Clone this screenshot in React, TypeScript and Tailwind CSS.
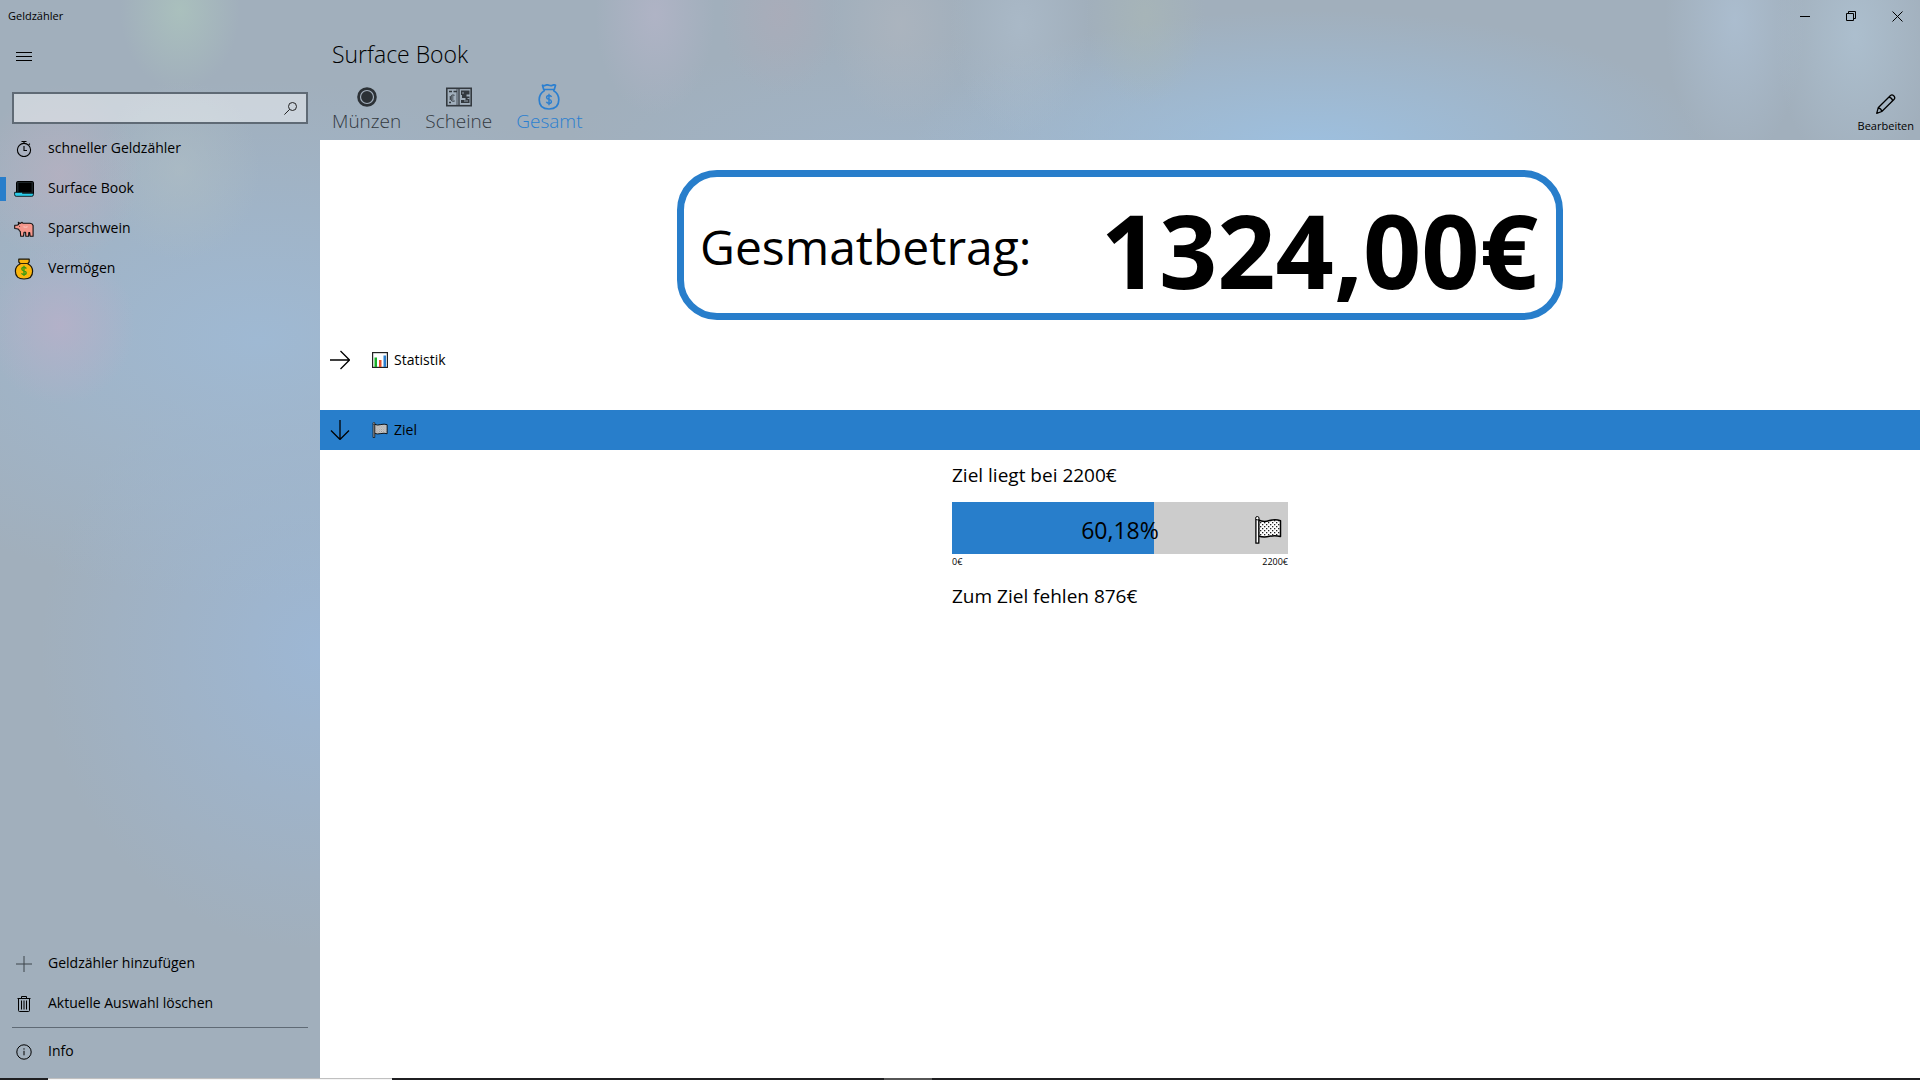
import type { ReactNode } from "react";

type IconProps = { className?: string };

function MenuIcon() {
  return (
    <svg className="size-4" viewBox="0 0 16 16" stroke="#000" shapeRendering="crispEdges" aria-hidden="true">
      <path d="M0 4.500h16M0 8.500h16M0 12.500h16" />
    </svg>
  );
}

function SearchIcon() {
  return (
    <svg className="size-[13px]" viewBox="0 0 13 13" fill="none" stroke="#222" strokeWidth="1" aria-hidden="true">
      <circle cx="8.500" cy="4.500" r="4" />
      <path d="M5.600 7.400L.4 12.600" />
    </svg>
  );
}

function StopwatchIcon() {
  return (
    <svg className="size-4" viewBox="0 0 16 16" fill="none" stroke="#000" strokeWidth="1.100" aria-hidden="true">
      <circle cx="8" cy="9" r="6.600" />
      <path d="M5.500.5h5M8 .5v2M8 5v4.500h3M12.700 3.800l1.200-1.200" />
    </svg>
  );
}

function LaptopIcon() {
  return (
    <svg className="h-4 w-5" viewBox="0 0 20 16" aria-hidden="true">
      <rect x="2.500" y=".5" width="17" height="13" rx="1.200" fill="#1c2326" stroke="#000" />
      <rect x="4.500" y="2" width="13" height="9" fill="#000" />
      <path d="M.6 11.300h7l.9.9h10.900v1.500q0 1.600-1.600 1.600H2.200Q.6 15.300.6 13.700z" fill="#2ccbe8" stroke="#000" strokeWidth=".8" />
    </svg>
  );
}

function PigIcon() {
  return (
    <svg className="h-4 w-5" viewBox="0 0 20 16" stroke="#111" strokeWidth="1.100" strokeLinejoin="round" aria-hidden="true">
      <path
        d="M4.300 1.200l1.800 1.300 2-1.200 1 1h7q2.400.2 3 2.200v10.700h-3l-.4-3.600-.9 0-.2 3.600h-2.800l-.2-4-1.600 0-.5 4H6.700l-.4-4.700Q5.200 9.800 4.700 8.300L2.800 7.800.7 7.500V4.300l2.300 0 1.700-.7z"
        fill="#f5978c"
      />
      <path d="M9.500 5.500q2 1.600 4 0" stroke="#fbc0b8" fill="none" />
      <circle cx="5.600" cy="5.200" r=".5" fill="#111" stroke="none" />
    </svg>
  );
}

function GoldBagIcon() {
  return (
    <svg className="h-[22px] w-5" viewBox="0 0 20 22" strokeLinejoin="round" aria-hidden="true">
      <path
        d="M4.800 1.200h10.400v2.800l-1.500 1.700Q18.600 8 18.600 13.200q0 7.800-8.600 7.800t-8.600-7.800Q1.400 8 6.300 5.700L4.800 4z"
        fill="#fbb50c"
        stroke="#1b1608"
        strokeWidth="1.200"
      />
      <path d="M6.500 5.500h7" stroke="#1b1608" strokeWidth=".9" />
      <path
        d="M12.300 10.600q-.6-1.400-2.300-1.400-2.200 0-2.200 1.800 0 1.400 2.200 1.900t2.200 1.900q0 1.800-2.200 1.800-1.900 0-2.400-1.500M10 7.800v10.300"
        fill="none"
        stroke="#3f9a12"
        strokeWidth="1.400"
      />
    </svg>
  );
}

function PlusIcon() {
  return (
    <svg className="size-4" viewBox="0 0 16 16" stroke="#3d444b" aria-hidden="true">
      <path d="M0 8h16M8 0v16" />
    </svg>
  );
}

function TrashIcon() {
  return (
    <svg className="size-4" viewBox="0 0 16 16" fill="none" stroke="#000" strokeWidth="1" aria-hidden="true">
      <path d="M1.500 2.500h13M5.500 2.500v-2h5v2M2.500 2.500v12q0 1 1 1h9q1 0 1-1v-12M5.500 4.500v9M8 4.500v9M10.500 4.500v9" />
    </svg>
  );
}

function InfoIcon() {
  return (
    <svg className="size-4" viewBox="0 0 16 16" fill="none" stroke="#000" aria-hidden="true">
      <circle cx="8" cy="8" r="7.200" strokeWidth="1" />
      <path d="M8 6.800v4.500" strokeWidth="1" />
      <circle cx="8" cy="4.900" r=".7" fill="#000" stroke="none" />
    </svg>
  );
}

function CoinIcon() {
  return (
    <svg className="size-5" viewBox="0 0 20 20" aria-hidden="true">
      <circle cx="10" cy="10" r="9.800" fill="#2c3136" />
      <circle cx="10" cy="10" r="6.500" fill="none" stroke="#a3afbc" strokeWidth="1.200" />
    </svg>
  );
}

function BanknoteIcon() {
  return (
    <svg className="h-5 w-[26px]" viewBox="0 0 26 20" fill="none" aria-hidden="true">
      <rect x=".8" y="1.300" width="24.400" height="17.400" stroke="#33393f" strokeWidth="1.600" />
      <path d="M3 4.500h3M7.500 4.500h3.500M3 15.500h2M13 2v16" stroke="#33393f" strokeWidth="1.300" />
      <path d="M11 2v16" stroke="#33393f" strokeWidth=".8" />
      <path d="M8.500 8.300Q4.800 7 4.700 11t4 3M3.500 10h4M3.500 12h4" stroke="#33393f" strokeWidth="1" />
      <path d="M15 3.500h8.500v4h-3v2h3V16H15v-3h4.500v-2H16V8h-1z" fill="#33393f" />
      <path d="M17 5v2M18 14h4M21.500 11.500h2" stroke="#a3afbc" strokeWidth=".9" />
    </svg>
  );
}

function BagOutlineIcon() {
  return (
    <svg className="h-[26px] w-[22px]" viewBox="0 0 22 26" fill="none" stroke="#2b7fd0" strokeLinejoin="round" aria-hidden="true">
      <path
        d="M4.500 1.200q1.500.8 3 0t3.500 0 3.500 0 3 0l-1.200 4.300H5.700zM6.200 5.500v1.300Q1.200 10 1.200 15.800q0 9.200 9.800 9.200t9.800-9.200q0-5.800-5-9V5.500"
        strokeWidth="1.700"
      />
      <path
        d="M13.500 13q-.5-1.500-2.500-1.500-2.400 0-2.400 1.900 0 1.500 2.400 2t2.400 2.100q0 1.900-2.400 1.900-2 0-2.600-1.600M11 9.800v11.400"
        strokeWidth="1.400"
      />
    </svg>
  );
}

function PencilIcon() {
  return (
    <svg className="size-5" viewBox="0 0 20 20" fill="none" stroke="#000" strokeWidth="1.300" strokeLinejoin="round" aria-hidden="true">
      <path d="M.7 19.300l1.500-5.500L14.500 1.500q1.500-1.300 3.200.2 1.800 1.700.5 3.500L5.800 17.500zM12.800 3.200q3.100.4 3.900 3.700M2.200 13.800q3 .4 3.600 3.700" />
    </svg>
  );
}

function ArrowRight() {
  return (
    <svg className="size-5" viewBox="0 0 20 20" fill="none" stroke="#000" strokeWidth="1.300" aria-hidden="true">
      <path d="M0 10h19.500M10.500 1l9 9-9 9" />
    </svg>
  );
}

function ArrowDown() {
  return (
    <svg className="size-5" viewBox="0 0 20 20" fill="none" stroke="#000" strokeWidth="1.300" aria-hidden="true">
      <path d="M10 0v19.500M1 10.500l9 9 9-9" />
    </svg>
  );
}

function ChartIcon() {
  return (
    <svg className="size-4" viewBox="0 0 16 16" aria-hidden="true">
      <rect x=".6" y=".6" width="14.800" height="14.800" fill="#fff" stroke="#222" strokeWidth="1.200" />
      <rect x="2.500" y="5.500" width="2.500" height="9.500" fill="#18b028" />
      <rect x="7" y="8" width="2.500" height="7" fill="#e8502a" />
      <rect x="11.500" y="3.500" width="2.500" height="11.500" fill="#2b7fd0" />
    </svg>
  );
}

function FlagIcon({ className, id, fill, dots }: IconProps & { id: string; fill: string; dots: string }) {
  return (
    <svg className={className} viewBox="0 0 28 28" strokeLinejoin="round" aria-hidden="true">
      <defs>
        <pattern id={id} width="4" height="4" patternUnits="userSpaceOnUse">
          <rect width="4" height="4" fill={fill} />
          <rect width="1.300" height="1.300" fill={dots} />
          <rect x="2" y="2" width="1.300" height="1.300" fill={dots} />
        </pattern>
      </defs>
      <path d="M4.500 4q5 2.500 11 .5 6-1.500 11 .2v15.800q-5.500-1.500-11-.2-6 1.300-11-.3z" fill={`url(#${id})`} stroke="#000" strokeWidth="1.500" />
      <path d="M1.900 3v24.200h2.900V3z" fill={fill} stroke="#000" strokeWidth="1.300" />
      <circle cx="3.300" cy="2.200" r="1.700" fill={fill} stroke="#000" strokeWidth="1" />
    </svg>
  );
}

function NavItem({ icon, label, active = false }: { icon: ReactNode; label: string; active?: boolean }) {
  return (
    <button type="button" className="flex h-10 w-full items-center text-left" aria-current={active ? "page" : undefined}>
      <span className={active ? "h-6 w-1.5 bg-[#287ecb]" : "h-6 w-1.5"} />
      <span className="flex w-9 justify-center">{icon}</span>
      <span className="ml-1.5 pb-0.5 text-sm">{label}</span>
    </button>
  );
}

function Tab({ icon, label, active = false }: { icon: ReactNode; label: string; active?: boolean }) {
  return (
    <button
      type="button"
      role="tab"
      aria-selected={active}
      className={
        active
          ? "flex flex-col items-center text-[19px] leading-[22px] font-light text-[#2b7fd0]"
          : "flex flex-col items-center text-[19px] leading-[22px] font-light text-[#33393f]"
      }
    >
      <span className="flex h-[26px] items-center">{icon}</span>
      {label}
    </button>
  );
}

function WindowButton({ label, children }: { label: string; children: ReactNode }) {
  return (
    <button type="button" aria-label={label} className="flex h-8 w-[46px] items-center justify-center">
      <svg className="size-[11px]" viewBox="0 0 11 11" fill="none" stroke="#000" aria-hidden="true">
        {children}
      </svg>
    </button>
  );
}

function Sidebar() {
  return (
    <aside className="flex w-80 shrink-0 flex-col">
      <div className="flex h-8 items-center px-2 text-[11px]">Geldzähler</div>
      <button type="button" aria-label="Menü" className="flex size-12 items-center justify-center">
        <MenuIcon />
      </button>
      <label className="mx-3 mt-3 mb-[5px] flex h-8 items-center border-2 border-[#5f6a75] bg-white/45 pr-[9px]">
        <input type="search" aria-label="Suchen" className="min-w-0 flex-1 bg-transparent px-2 text-sm outline-none" />
        <SearchIcon />
      </label>
      <nav className="flex flex-1 flex-col" aria-label="Geldzähler">
        <NavItem icon={<StopwatchIcon />} label="schneller Geldzähler" />
        <NavItem icon={<LaptopIcon />} label="Surface Book" active />
        <NavItem icon={<PigIcon />} label="Sparschwein" />
        <NavItem icon={<GoldBagIcon />} label="Vermögen" />
      </nav>
      <NavItem icon={<PlusIcon />} label="Geldzähler hinzufügen" />
      <NavItem icon={<TrashIcon />} label="Aktuelle Auswahl löschen" />
      <hr className="mx-3 mt-[3px] mb-1 border-[#5f6a75]" />
      <NavItem icon={<InfoIcon />} label="Info" />
      <div className="h-[6px]" />
    </aside>
  );
}

function Header() {
  return (
    <header className="flex h-[140px] justify-between">
      <div className="flex flex-col pl-3">
        <h1 className="mt-[38px] text-[23px] leading-8 font-light">Surface Book</h1>
        <div role="tablist" className="mt-3.5 flex gap-6">
          <Tab icon={<CoinIcon />} label="Münzen" />
          <Tab icon={<BanknoteIcon />} label="Scheine" />
          <Tab icon={<BagOutlineIcon />} label="Gesamt" active />
        </div>
      </div>
      <div className="flex flex-col items-end justify-between">
        <div className="flex">
          <WindowButton label="Minimieren">
            <path d="M0 5.500h10" />
          </WindowButton>
          <WindowButton label="Verkleinern">
            <path d="M.5 2.500h7v7h-7zM2.500 2.500v-2h7v7h-2" />
          </WindowButton>
          <WindowButton label="Schließen">
            <path d="M.5.5l10 10M10.500.5l-10 10" />
          </WindowButton>
        </div>
        <button type="button" className="flex flex-col items-center gap-1 px-[6px] pb-1.5 text-[11px] leading-4">
          <PencilIcon />
          Bearbeiten
        </button>
      </div>
    </header>
  );
}

function Content() {
  const amount = 1324;
  const goal = 2200;
  return (
    <main className="flex flex-1 flex-col bg-white">
      <section className="mx-auto mt-[30px] flex h-[150px] w-[886px] max-w-full items-center justify-between rounded-[40px] border-[7px] border-[#287ecb] pr-[18px] pl-4">
        <span className="pt-1 text-5xl leading-none">Gesmatbetrag:</span>
        <strong className="pt-2.5 text-[102px] leading-none font-bold">1324,00€</strong>
      </section>

      <button type="button" aria-expanded="false" className="mt-5 flex h-10 w-full items-center pl-[10px] text-left text-sm">
        <ArrowRight />
        <span className="mr-1.5 ml-[22px]">
          <ChartIcon />
        </span>
        Statistik
      </button>

      <button type="button" aria-expanded="true" className="mt-[30px] flex h-10 w-full items-center bg-[#287ecb] pl-[10px] text-left text-sm">
        <ArrowDown />
        <span className="mr-1.5 ml-[22px]">
          <FlagIcon id="flag-small" fill="#c8c8c8" dots="#909090" className="size-4" />
        </span>
        Ziel
      </button>

      <section className="mx-auto mt-[11px] w-[336px]">
        <p className="text-[19px] leading-7">Ziel liegt bei 2200€</p>
        <div
          role="progressbar"
          aria-valuenow={amount}
          aria-valuemin={0}
          aria-valuemax={goal}
          aria-label="Ziel"
          className="relative mt-[13px] flex h-[52px] items-center justify-center bg-[#cccccc]"
        >
          <div className="absolute inset-y-0 left-0 bg-[#287ecb]" style={{ width: `${(amount / goal) * 100}%` }} />
          <span className="relative pt-1 text-[23px] leading-none">60,18%</span>
          <FlagIcon id="flag-large" fill="#ffffff" dots="#222222" className="absolute top-3.5 right-[6px] size-7" />
        </div>
        <div className="flex justify-between text-[9px] leading-4">
          <span>0€</span>
          <span>2200€</span>
        </div>
        <p className="mt-3 text-[19px] leading-7">Zum Ziel fehlen 876€</p>
      </section>
    </main>
  );
}

function TaskbarEdge() {
  return (
    <div className="flex h-0.5 bg-[#1f1f21]">
      <div className="w-12" />
      <div className="w-[344px] border-t border-[#c0c0c0] bg-[#f5f5f5]" />
      <div className="ml-[492px] w-12 bg-[#565656]" />
    </div>
  );
}

export default function App() {
  return (
    <div className="flex min-h-screen flex-col bg-[#a1afbc] bg-[radial-gradient(60px_80px_at_180px_10px,#adc6bdbb,#adc6bd00),radial-gradient(60px_100px_at_655px_15px,#b9b6cb99,#b9b6cb00),radial-gradient(60px_80px_at_780px_15px,#b0aab788,#b0aab700),radial-gradient(70px_100px_at_900px_25px,#b3b8c088,#b3b8c000),radial-gradient(70px_110px_at_1020px_25px,#afbfce99,#afbfce00),radial-gradient(60px_90px_at_1145px_15px,#aab8b599,#aab8b500),radial-gradient(70px_140px_at_1735px_20px,#b0c4d8aa,#b0c4d800),radial-gradient(80px_140px_at_1855px_35px,#b0c4d4bb,#b0c4d400),radial-gradient(80px_90px_at_60px_175px,#bbb0c0aa,#bbb0c000),radial-gradient(75px_80px_at_60px_325px,#b8b0c8cc,#b8b0c800),radial-gradient(80px_90px_at_180px_170px,#aebdc4aa,#aebdc400),radial-gradient(400px_140px_at_1310px_150px,#9dc0e0,#9dc0e000),radial-gradient(340px_120px_at_900px_160px,#a0b8d088,#a0b8d000),radial-gradient(440px_260px_at_260px_340px,#9fb9d3,#9fb9d300),radial-gradient(280px_300px_at_320px_650px,#9db7d4,#9db7d400)] font-['Open_Sans','Noto_Sans',sans-serif] text-black">
      <div className="flex flex-1">
        <Sidebar />
        <div className="flex min-w-0 flex-1 flex-col">
          <Header />
          <Content />
        </div>
      </div>
      <TaskbarEdge />
    </div>
  );
}
